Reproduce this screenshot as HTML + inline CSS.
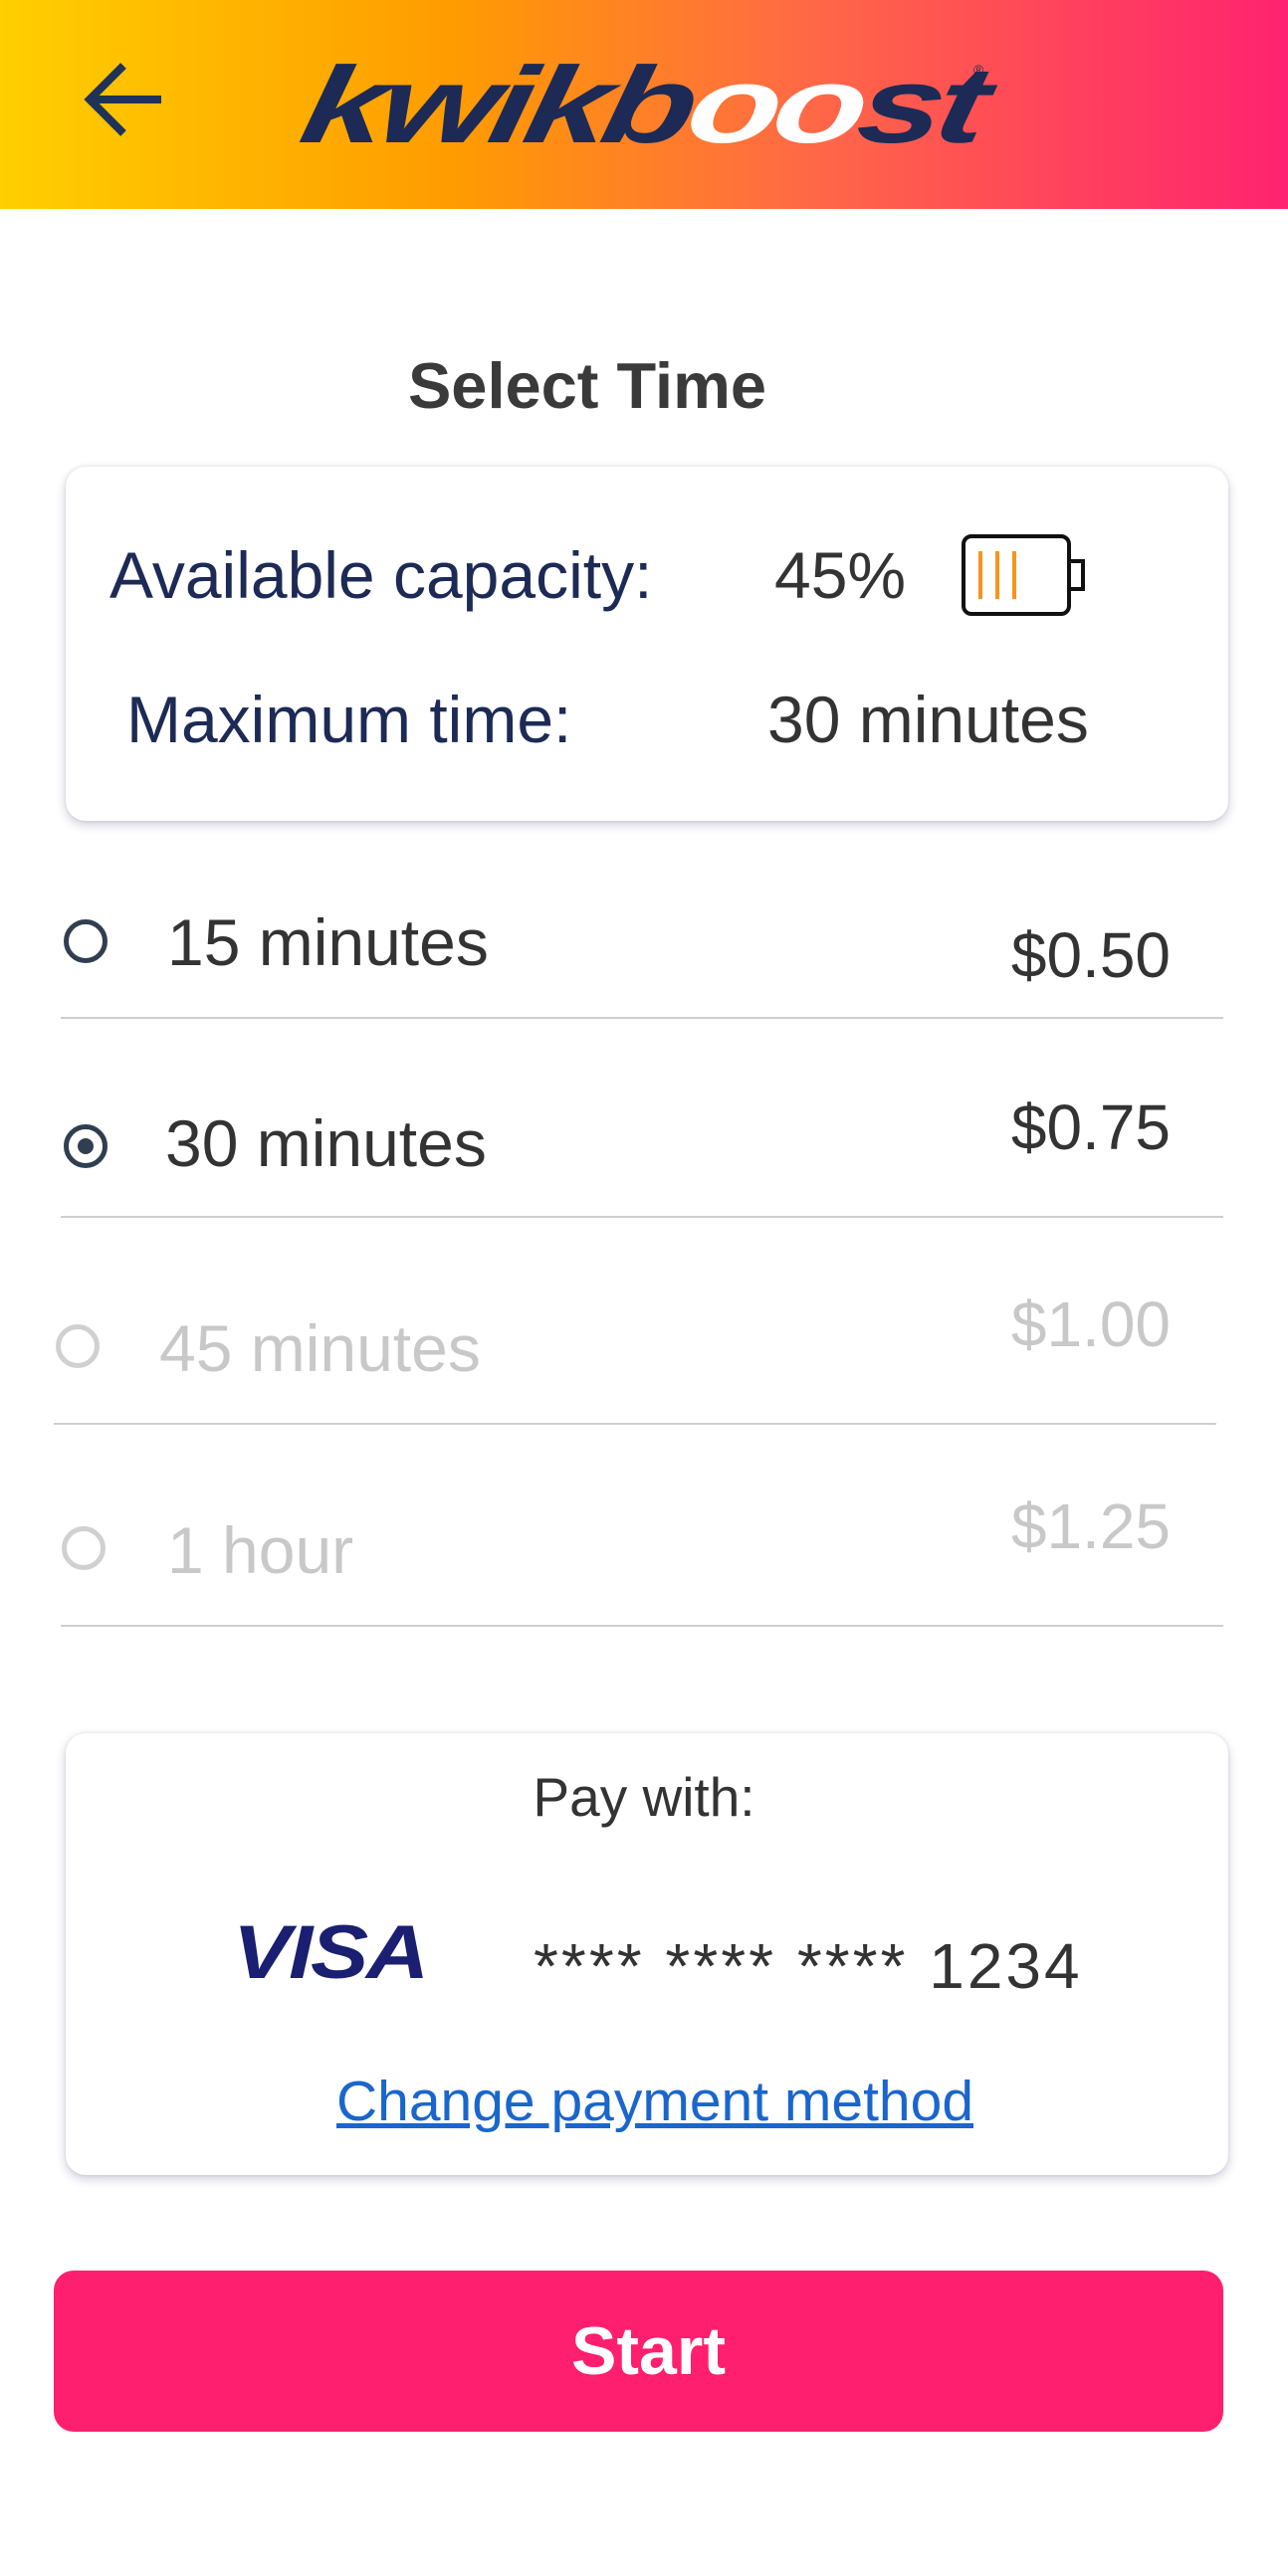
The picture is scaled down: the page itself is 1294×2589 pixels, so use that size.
<!DOCTYPE html>
<html><head><meta charset="utf-8"><style>
*{margin:0;padding:0;box-sizing:border-box}
body{width:1294px;height:2589px;background:#fff;font-family:"Liberation Sans",sans-serif;position:relative;overflow:hidden}
.abs{position:absolute;white-space:nowrap}
.header{position:absolute;left:0;top:0;width:1294px;height:210px;background:linear-gradient(90deg,#ffcf00 0%,#ff9c00 35%,#ff6a45 62%,#ff2270 100%)}
.card{position:absolute;left:66px;width:1168px;background:#fff;border-radius:20px;box-shadow:0 4px 10px rgba(60,60,110,.25),0 0 3px rgba(60,60,110,.12)}
.t{font-size:66px;line-height:1}
.p{font-size:64px;line-height:1}
.navy{color:#1c2a55}
.dark{color:#333}
.grey{color:#c8c8c8}
.div{position:absolute;height:2px;background:#cfcfcf;width:1168px}
.radio{position:absolute;width:44px;height:44px;border-radius:50%;border:5px solid #2f3e50}
.radio.g{border-color:#d0d0d0}
.radio .dot{position:absolute;left:9px;top:9px;width:16px;height:16px;border-radius:50%;background:#2f3e50}
</style></head><body>
<div class="header"></div>
<svg class="abs" style="left:84px;top:62px" width="82" height="76" viewBox="0 0 82 76"><path d="M40 4 L6 38 L40 72 M6 38 H78" fill="none" stroke="#1f3358" stroke-width="8"/></svg>
<div class="abs" style="left:316px;top:52px;font-size:128px;font-weight:bold;font-style:italic;color:#1c2a55;letter-spacing:-6px;transform:scale(1.19,0.85) skewX(-8deg);transform-origin:left top;line-height:1">kwik<span>b</span><span style="color:#fff">oo</span>st</div>
<div class="abs" style="left:978px;top:62px;font-size:14px;color:#1c2a55">®</div>

<div class="abs" style="left:0;width:1180px;text-align:center;top:350px;font-size:65px;font-weight:bold;color:#3a3a3a">Select Time</div>

<div class="card" style="top:469px;height:356px"></div>
<div class="abs t navy" style="left:110px;top:545px">Available capacity:</div>
<div class="abs t dark" style="left:778px;top:545px">45%</div>
<svg class="abs" style="left:965px;top:536px" width="130" height="84" viewBox="0 0 130 84"><rect x="3" y="3" width="106" height="78" rx="8" fill="#fff" stroke="#111" stroke-width="4"/><rect x="109" y="28" width="14" height="28" fill="#fff" stroke="#111" stroke-width="4"/><path d="M20 18V66M37 18V66M54 18V66" stroke="#f7941d" stroke-width="4"/></svg>
<div class="abs t navy" style="left:127px;top:690px">Maximum time:</div>
<div class="abs t dark" style="left:771px;top:690px">30 minutes</div>

<div class="radio" style="left:64px;top:924px"></div>
<div class="abs t dark" style="left:168px;top:914px">15 minutes</div>
<div class="abs p dark" style="right:118px;top:928px">$0.50</div>
<div class="div" style="left:61px;top:1022px"></div>

<div class="radio" style="left:64px;top:1130px"><div class="dot"></div></div>
<div class="abs t dark" style="left:166px;top:1116px">30 minutes</div>
<div class="abs p dark" style="right:118px;top:1101px">$0.75</div>
<div class="div" style="left:61px;top:1222px"></div>

<div class="radio g" style="left:56px;top:1331px"></div>
<div class="abs t grey" style="left:160px;top:1322px">45 minutes</div>
<div class="abs p grey" style="right:118px;top:1299px">$1.00</div>
<div class="div" style="left:54px;top:1430px"></div>

<div class="radio g" style="left:62px;top:1534px"></div>
<div class="abs t grey" style="left:168px;top:1525px">1 hour</div>
<div class="abs p grey" style="right:118px;top:1502px">$1.25</div>
<div class="div" style="left:61px;top:1633px"></div>

<div class="card" style="top:1742px;height:444px"></div>
<div class="abs dark" style="left:0;width:1294px;text-align:center;top:1779px;font-size:55px;line-height:1">Pay with:</div>
<div class="abs" style="left:234px;top:1925px;font-size:76px;font-weight:bold;font-style:italic;color:#1a1f71;letter-spacing:-2px;line-height:1;transform:scaleX(1.15);transform-origin:left top">VISA</div>
<div class="abs dark" style="left:536px;top:1944px;font-size:64px;line-height:1;letter-spacing:3px">**** **** **** 1234</div>
<div class="abs" style="left:0;width:1316px;text-align:center;top:2084px;font-size:57px;line-height:1;color:#1a66cc;text-decoration:underline">Change payment method</div>

<div class="abs" style="left:54px;top:2282px;width:1175px;height:162px;border-radius:20px;background:#ff1f6e;color:#fff;font-weight:bold;font-size:68px;text-align:center;line-height:162px;padding-left:20px">Start</div>
</body></html>
